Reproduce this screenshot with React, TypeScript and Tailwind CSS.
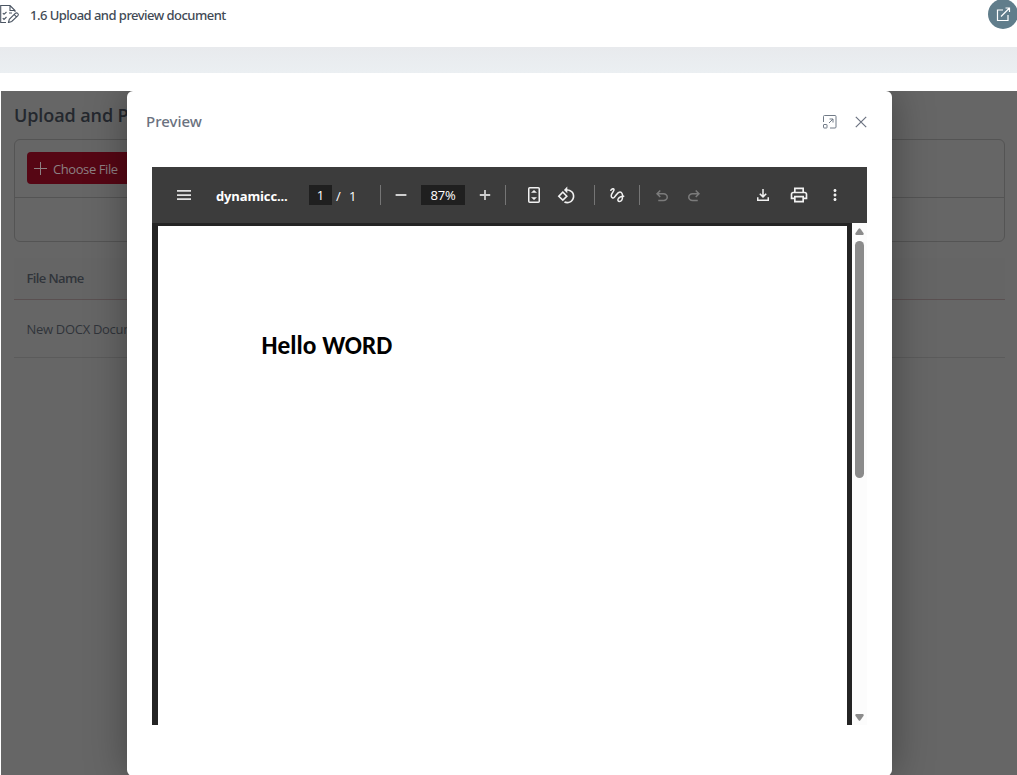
import React from "react";

type IconProps = { d: string; className?: string; inner?: string };

function Icon({ d, className = "", inner = "size-[18px]" }: IconProps) {
  return (
    <span className={`flex size-5 shrink-0 items-center justify-center ${className}`}>
      <svg viewBox="0 0 24 24" fill="currentColor" className={inner}>
        <path d={d} />
      </svg>
    </span>
  );
}

function Divider({ className = "" }: { className?: string }) {
  return <div className={`h-5 w-px shrink-0 bg-[#757575] ${className}`} />;
}

function DocIcon() {
  return (
    <svg viewBox="0 0 20 19" fill="none" stroke="#4b5563" strokeWidth="1.1" className="h-[19px] w-5 shrink-0">
      <path d="M15 7V5.5L10 .5H.7v17H6M10 .5V5.5h5" />
      <path d="M2.8 8l1.2 1.3L6.5 7M2.8 13.2l1.2 1.3L6.5 12M9 8h3" />
      <path d="M8.5 17.5l.8-3.2 6.2-6.1q1-.8 2.2.2t.2 2.2l-6.2 5.9-3 1zM14.3 9.7l2.2 2.2" />
    </svg>
  );
}

function Toolbar() {
  return (
    <div className="flex h-14 items-center bg-[#3c3c3c] pl-[22px] text-[13px] text-white">
      <svg viewBox="0 0 20 20" className="size-5 shrink-0" fill="#e0e0e0">
        <path d="M3 5h14v1.7H3zM3 9.2h14v1.7H3zM3 13.3h14V15H3z" />
      </svg>
      <div className="ml-[22px] w-[72px] shrink-0 whitespace-nowrap pt-px font-bold leading-5 tracking-[-0.15px]">dynamicc...</div>
      <div className="ml-[21px] h-5 w-[23px] shrink-0 bg-[#1f1f1f] text-center leading-[21px]">1</div>
      <div className="ml-1 w-2 shrink-0 pt-px leading-5">/</div>
      <div className="ml-[5px] w-2 shrink-0 pt-px leading-5">1</div>
      <Divider className="ml-[23px]" />
      <svg viewBox="0 0 20 20" className="ml-2.5 size-5 shrink-0" fill="#cfcfcf"><path d="M4.6 9h10.8v2H4.6z" /></svg>
      <div className="ml-2.5 h-5 w-11 shrink-0 bg-[#1f1f1f] text-center leading-[21px] tracking-[-0.25px]">87%</div>
      <svg viewBox="0 0 20 20" className="ml-2.5 size-5 shrink-0" fill="#cfcfcf"><path d="M4.8 9.1h4.3V4.9h1.8v4.2h4.3v1.8h-4.3v4.2H9.1v-4.2H4.8z" /></svg>
      <Divider className="ml-2.5" />
      <svg viewBox="0 0 20 20" className="ml-[18px] size-5 shrink-0" fill="none" stroke="#f1f1f1" strokeWidth="1.5">
        <rect x="4.75" y="2.75" width="10.5" height="14.5" rx="1" />
        <path d="M7 7.7L10 4.9l3 2.8zM7 12.3l3 2.8 3-2.8z" fill="#f1f1f1" stroke="none" />
      </svg>
      <Icon inner="size-[19px]" className="ml-3 text-[#f1f1f1]" d="M7.34 6.41L.86 12.9l6.49 6.48 6.49-6.48-6.5-6.49zM3.69 12.9l3.66-3.66L11 12.9l-3.66 3.66-3.65-3.66zm15.67-6.26C17.61 4.88 15.3 4 13 4V.76L8.76 5 13 9.24V6c1.79 0 3.58.68 4.95 2.05 2.73 2.73 2.73 7.17 0 9.9C16.58 19.32 14.79 20 13 20c-.97 0-1.94-.21-2.84-.61l-1.49 1.49C10.02 21.62 11.51 22 13 22c2.3 0 4.61-.88 6.36-2.64 3.52-3.51 3.52-9.21 0-12.72z" />
      <Divider className="ml-[18px]" />
      <svg viewBox="0 0 20 20" fill="none" stroke="#f1f1f1" strokeWidth="1.5" strokeLinecap="round" className="ml-3 size-5 shrink-0">
        <path d="M3.8 5.2Q6.2 2.7 7 4.3C7.6 6 4.1 8 4.2 11c.1 1.8 1.8 2.6 3.2 1.2 2-2 3.1-5.2 5.6-5.2 3.8 0 3.3 9.4-.5 9.4-1.4 0-2.2-1.3-1.2-2.8 1.1-1.7 3-2.3 5.4-2.3" />
      </svg>
      <Divider className="ml-3" />
      <Icon className="ml-3 pt-px text-[#7b7b7b]" d="M7 19v-2h7.1q1.575 0 2.738-1T18 13.5 16.838 11 14.1 10H7.8l2.6 2.6L9 14 4 9l5-5 1.4 1.4L7.8 8h6.3q2.425 0 4.163 1.575T20 13.5t-1.737 3.925T14.1 19z" />
      <Icon className="ml-3 pt-px text-[#7b7b7b]" d="M9.9 19q-2.425 0-4.163-1.575T4 13.5t1.737-3.925T9.9 8h6.3l-2.6-2.6L15 4l5 5-5 5-1.4-1.4 2.6-2.6H9.9q-1.575 0-2.737 1T6 13.5 7.163 16 9.9 17H17v2z" />
      <Icon className="ml-[49px] text-[#f1f1f1]" d="M12 16l-5-5 1.4-1.45 2.6 2.6V4h2v8.15l2.6-2.6L17 11zm-8 4v-5h2v3h12v-3h2v5z" />
      <Icon inner="size-5" className="ml-4 text-[#f1f1f1]" d="M19 8h-1V3H6v5H5c-1.66 0-3 1.34-3 3v6h4v4h12v-4h4v-6c0-1.66-1.34-3-3-3zM8 5h8v3H8V5zm8 12v2H8v-4h8v2zm2-2v-2H6v2H4v-4c0-.55.45-1 1-1h14c.55 0 1 .45 1 1v4h-2z" />
      <Icon className="ml-4 text-[#f1f1f1]" d="M12 8c1.1 0 2-.9 2-2s-.9-2-2-2-2 .9-2 2 .9 2 2 2zm0 2c-1.1 0-2 .9-2 2s.9 2 2 2 2-.9 2-2-.9-2-2-2zm0 6c-1.1 0-2 .9-2 2s.9 2 2 2 2-.9 2-2-.9-2-2-2z" />
    </div>
  );
}

function PreviewDialog() {
  return (
    <div className="absolute left-[126px] top-0 h-[685px] w-[765px] rounded-[6px] bg-white shadow-[0_0_40px_rgba(0,0,0,0.35)]">
      <div className="flex h-[76px] items-start pl-[19px] pr-[25px]">
        <h2 className="mt-5 flex-1 text-[15px] font-medium leading-5 text-[#6b7280] [font-family:'Noto_Sans',sans-serif]">Preview</h2>
        <svg viewBox="0 0 14 14" fill="none" stroke="#717b87" className="mr-[18px] mt-6 size-3.5">
          <path d="M.5 7V1.5a1 1 0 0 1 1-1h10.500a1 1 0 0 1 1 1v10.500a1 1 0 0 1-1 1H7" />
          <rect x=".5" y="9.5" width="3.5" height="3.5" rx=".5" />
          <path d="M6 8l4-4M6.5 4H10v3.5" />
        </svg>
        <svg viewBox="0 0 12 12" fill="none" stroke="#6b7280" strokeWidth="1.2" className="mt-[25px] size-3">
          <path d="M.8.8l10.4 10.4M11.2.8L.8 11.2" />
        </svg>
      </div>
      <div className="ml-[25px] flex w-[715px] flex-col">
        <Toolbar />
        <div className="flex h-[502px]">
          <div className="flex-1 bg-[#242424] pl-1.5 pr-[5px] pt-[3px]">
            <div className="h-full bg-white pl-[103.5px] pt-[104px]">
              <p className="whitespace-nowrap text-[25.4px] font-bold leading-8 text-black [font-family:Carlito,'Open_Sans',sans-serif]">Hello WORD</p>
            </div>
          </div>
          <div className="flex w-[15px] flex-col bg-[#fcfcfc] pl-[3px] pt-[5px]">
            <svg viewBox="0 0 9 7" className="h-[7px] w-[9px]" fill="#8b8b8b"><path d="M3.600.7q.9-1 1.800 0l3.200 4.500Q9 7 7.700 7H1.300Q0 7 .4 5.200z" /></svg>
            <div className="mt-1.5 h-[237px] w-[9px] rounded-full bg-[#8b8b8b]" />
            <svg viewBox="0 0 9 7" className="mt-[236px] h-[7px] w-[9px]" fill="#8b8b8b"><path d="M3.600 6.300q.9 1 1.800 0l3.200-4.500Q9 0 7.700 0H1.300Q0 0 .4 1.800z" /></svg>
          </div>
        </div>
      </div>
    </div>
  );
}

export default function App() {
  return (
    <div className="flex h-[775px] w-[1017px] flex-col overflow-hidden bg-white [font-family:'Open_Sans','Noto_Sans',sans-serif]">
      <header className="flex h-[47px] shrink-0 items-start justify-between">
        <div className="flex pt-[5px]">
          <DocIcon />
          <span className="ml-[10px] whitespace-nowrap text-[13px] font-medium leading-5 tracking-[-0.53px] text-[#424a55] [font-family:'Noto_Sans',sans-serif]">1.6 Upload and preview document</span>
        </div>
        <div className="-mr-px -mt-px flex size-[30px] items-center justify-center rounded-full bg-[#607d8b]">
          <svg viewBox="0 0 15 15" fill="none" stroke="white" strokeWidth="1.2" className="size-[15px]">
            <path d="M7 3H1.5v10.5H12V8M5 9.5L13.5 1M9.5 1h4v4" />
          </svg>
        </div>
      </header>
      <div className="h-[26px] shrink-0 bg-linear-to-b from-[#e8eaed] to-[#ebeff2]" />
      <main className="relative ml-px mt-[18px] h-[684px] overflow-hidden bg-[#666] px-3 text-[#30343a]">
        <div className="ml-px">
          <h1 className="h-12 whitespace-nowrap pt-3 text-[18px] font-semibold leading-6 tracking-[-0.1px] text-[#24282e]">Upload and P</h1>
          <section className="h-[103px] w-[991px] rounded-[6px] border border-[#545454]">
            <div className="h-[58px] border-b border-[#545454] pl-3 pt-3">
              <button className="flex h-8 w-[120px] items-center rounded bg-[#560614] pl-[7px] text-[13px] tracking-[-0.42px] text-[#8c8083]">
                <svg viewBox="0 0 13 13" className="size-[13px]" stroke="currentColor"><path d="M6.5 0v13M0 6.5h13" /></svg>
                <span className="ml-[6px] whitespace-nowrap pt-[3px]">Choose File</span>
              </button>
            </div>
          </section>
          <div className="mt-4 w-[991px] text-[13px]">
            <div className="flex h-[42px] items-center border-b border-[#5a5051] bg-[#656565] pl-[12.5px] font-semibold tracking-[-0.6px]">File Name</div>
            <div className="flex h-[58px] items-center border-b border-[#5b5b5b] pl-[12.5px] pt-0.5 tracking-[-0.3px]">New DOCX Docum</div>
          </div>
        </div>
        <PreviewDialog />
      </main>
    </div>
  );
}
